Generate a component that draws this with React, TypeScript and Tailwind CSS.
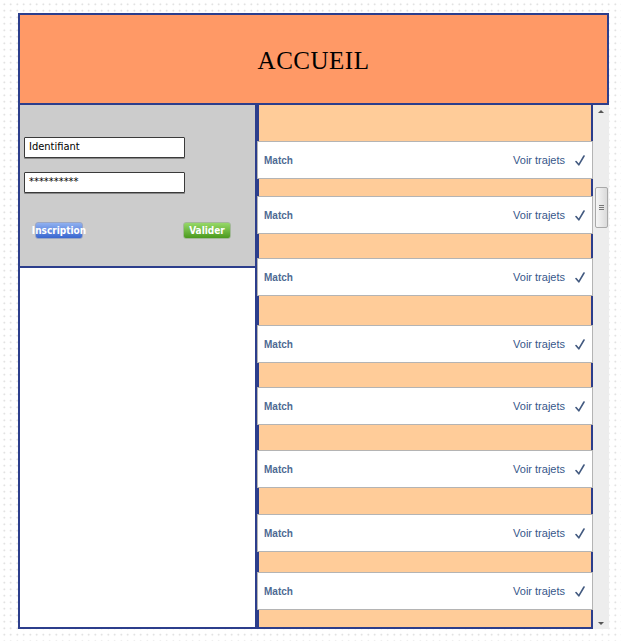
import React from "react"

const navy = "border-[#2c3e8c]"

const gaps = ["h-[36px]", "h-[17px]", "h-[24px]", "h-[29px]", "h-[24px]", "h-[25px]", "h-[26px]", "h-[20px]"]

const Check = () => (
  <svg width="10" height="11" viewBox="0 0 10 11" fill="none">
    <path d="M1 6.5 L3.8 9.8 L9 1" stroke="#435a80" strokeWidth="1.6" strokeLinecap="round" strokeLinejoin="round" />
  </svg>
)

const MatchRow = () => (
  <div className="h-[38px] bg-white border border-[#b4b4b4] flex items-center pl-[6px] pr-[7px]">
    <span className="text-[10px] font-bold text-[#4d6a93]">Match</span>
    <span className="ml-auto text-[11px] text-[#37578a]">Voir trajets</span>
    <span className="ml-[10px] flex items-center">
      <Check />
    </span>
  </div>
)

const Scrollbar = () => (
  <div className="w-[16px] h-full bg-[#ededed] flex flex-col items-center">
    <div className="h-[12px] w-full flex items-center justify-center">
      <div className="w-0 h-0 border-x-[3px] border-x-transparent border-b-[3px] border-b-[#555]" />
    </div>
    <div className="h-[70px]" />
    <div className="w-[13px] h-[41px] ml-[1px] rounded-[2px] border border-[#a9a9a9] bg-[linear-gradient(to_right,#f6f6f6,#dadada)] flex flex-col items-center justify-center gap-[1px]">
      <div className="w-[5px] h-px bg-[#777]" />
      <div className="w-[5px] h-px bg-[#777]" />
      <div className="w-[5px] h-px bg-[#777]" />
    </div>
    <div className="flex-1" />
    <div className="h-[12px] w-full flex items-center justify-center">
      <div className="w-0 h-0 border-x-[3px] border-x-transparent border-t-[3px] border-t-[#555]" />
    </div>
  </div>
)

const Field = ({ text }: { text: string }) => (
  <div className="h-[21px] w-[161px] bg-white border border-[#3a3a3a] rounded-[1px] shadow-[0_1px_0_#888] flex items-center pl-[4px] text-[11px] text-black" style={{ fontFamily: '"DejaVu Sans Condensed", "DejaVu Sans", sans-serif' }}>
    {text}
  </div>
)

export default function App() {
  return (
    <div className="w-[621px] h-[641px] bg-white bg-[radial-gradient(circle,#d4d4d4_0.8px,transparent_1px)] bg-[length:6.5px_6.5px] bg-[position:1px_1px]" style={{ fontFamily: '"Liberation Sans", Arial, sans-serif' }}>
      <div className="ml-[18px] pt-[13px] w-[591px]">
        {/* header */}
        <div className={`h-[92px] border-2 ${navy} bg-[#ff9966] flex items-center justify-center pt-[3px]`}>
          <h1 className="text-[25px] text-black tracking-[0.5px]" style={{ fontFamily: '"Liberation Serif", "DejaVu Serif", serif' }}>ACCUEIL</h1>
        </div>
        {/* body */}
        <div className="flex h-[524px]">
          {/* left column */}
          <div className="w-[239px] flex flex-col">
            <div className={`h-[163px] bg-[#cccccc] border-x-2 border-b-2 ${navy} pt-[32px] pl-[4px]`}>
              <Field text="Identifiant" />
              <div className="mt-[14px]">
                <Field text="**********" />
              </div>
              <div className="mt-[29px] flex justify-between pl-[11px] pr-[24px]">
                <button className="h-[17px] w-[48px] rounded-[3px] border border-[#9aa6c4] bg-[linear-gradient(to_bottom,#8fb0f0,#3a67d0)] text-white text-[10px] font-semibold flex items-center justify-center whitespace-nowrap" style={{ fontFamily: '"DejaVu Sans Condensed", "DejaVu Sans", sans-serif' }}>
                  Inscription
                </button>
                <button className="h-[17px] w-[48px] rounded-[3px] border border-[#a4b89a] bg-[linear-gradient(to_bottom,#96d868,#4b9a1e)] text-white text-[10px] font-semibold flex items-center justify-center" style={{ fontFamily: '"DejaVu Sans Condensed", "DejaVu Sans", sans-serif' }}>
                  Valider
                </button>
              </div>
            </div>
            <div className={`flex-1 bg-white border-x-2 border-b-2 ${navy}`} />
          </div>
          {/* list */}
          <div className="w-[336px] flex flex-col">
            {gaps.map((g, i) => (
              <React.Fragment key={i}>
                <div className={`${g} bg-[#ffcc99] border-x-2 ${navy}`} />
                <MatchRow />
              </React.Fragment>
            ))}
            <div className={`h-[19px] bg-[#ffcc99] border-x-2 border-b-2 ${navy}`} />
          </div>
          <Scrollbar />
        </div>
      </div>
    </div>
  )
}
